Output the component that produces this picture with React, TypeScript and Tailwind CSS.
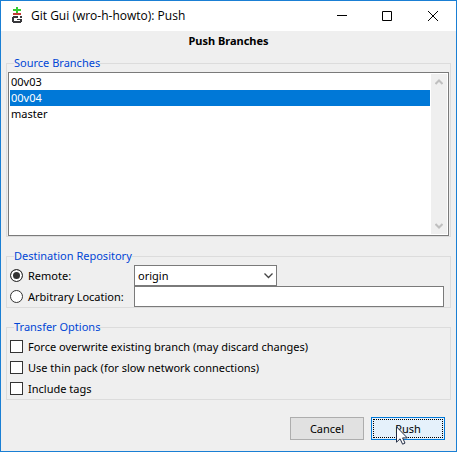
import { useState } from "react";
import type { ReactNode } from "react";

const branches = ["00v03", "00v04", "master"];

const transferOptions = [
  "Force overwrite existing branch (may discard changes)",
  "Use thin pack (for slow network connections)",
  "Include tags",
];

function Group({ title, children }: { title: string; children: ReactNode }) {
  return (
    <fieldset className="mx-[5px] min-w-0 border border-[#dcdcdc]">
      <legend className="ml-[7px] h-[17px] leading-4 text-[#0046d5]">{title}</legend>
      {children}
    </fieldset>
  );
}

function GitIcon() {
  return (
    <svg width="12" height="18" viewBox="0 0 12 18" shapeRendering="crispEdges" aria-hidden="true">
      <path d="M5 0h2v2h3v2H7v2H5V4H2V2h3z" fill="#31cb31" />
      <path d="M2 6h8v2H2z" fill="#c23a34" />
      <path d="M2 9h5v2H3v3h6v-1H6v-1h5v3h-1v1H2v-1H1v-5h1zM9 9h2v2H9z" fill="#38383c" />
    </svg>
  );
}

function ScrollArrow({ up = false }: { up?: boolean }) {
  return (
    <svg width="8" height="6" viewBox="0 0 8 6" fill="none" stroke="#bfbfbf" strokeWidth="2" aria-hidden="true">
      <path d={up ? "M.5 5 4 1.500 7.500 5" : "M.5 1 4 4.500 7.500 1"} />
    </svg>
  );
}

function TitleBar() {
  return (
    <header className="flex h-[30px] items-center bg-white pl-[10px]">
      <GitIcon />
      <h1 className="ml-2 grow font-['Open_Sans','Noto_Sans',sans-serif] text-xs">Git Gui (wro-h-howto): Push</h1>
      <button aria-label="Minimize" className="flex h-full w-[45px] items-center justify-center">
        <svg width="10" height="10" shapeRendering="crispEdges"><path d="M0 4h10v1H0z" /></svg>
      </button>
      <button aria-label="Maximize" className="flex h-full w-[45px] items-center justify-center">
        <svg width="10" height="10" fill="none" stroke="#000"><path d="M.5.5h9v9h-9z" /></svg>
      </button>
      <button aria-label="Close" className="flex h-full w-[47px] items-center justify-center">
        <svg width="10" height="10" stroke="#000"><path d="m0 0 10 10M10 0 0 10" /></svg>
      </button>
    </header>
  );
}

function Radio({ label, checked, onSelect }: { label: string; checked: boolean; onSelect: () => void }) {
  return (
    <label className="flex items-center gap-[5px]">
      <input
        type="radio"
        name="destination"
        checked={checked}
        onChange={onSelect}
        className="size-[13px] appearance-none rounded-full border border-[#333] bg-white shadow-[inset_0_0_0_2px_#fff] checked:bg-[#333]"
      />
      {label}
    </label>
  );
}

export default function App() {
  const [branch, setBranch] = useState("00v04");
  const [destination, setDestination] = useState("remote");

  return (
    <main className="relative border border-[#1a7fd4] bg-[#efefef] pb-[11px] font-['Noto_Sans','Open_Sans',sans-serif] text-[11px] leading-4 text-black">
      <TitleBar />
      <h2 className="mb-1 h-5 text-center leading-5 font-bold">Push Branches</h2>

      <div className="flex flex-col gap-[11px]">
        <Group title="Source Branches">
          <div className="mx-px flex h-[164px] border border-[#7a7a7a] bg-white p-px">
            <select
              size={10}
              aria-label="Source Branches"
              value={branch}
              onChange={(e) => setBranch(e.target.value)}
              className="min-w-0 grow appearance-none overflow-hidden outline-none"
            >
              {branches.map((name) => (
                <option
                  key={name}
                  className="h-4 px-px py-0 leading-4 checked:bg-[linear-gradient(#0078d7,#0078d7)] checked:[-webkit-text-fill-color:#fff]"
                >
                  {name}
                </option>
              ))}
            </select>
            <div className="ml-px flex w-4 flex-col items-center justify-between bg-[#efefef] py-[5px]">
              <ScrollArrow up />
              <ScrollArrow />
            </div>
          </div>
        </Group>

        <Group title="Destination Repository">
          <div className="grid grid-cols-[124px_1fr] grid-rows-[21px_21px] pr-[6px] pl-[3px]">
            <Radio label="Remote:" checked={destination === "remote"} onSelect={() => setDestination("remote")} />
            <div className="relative w-[143px]">
              <select aria-label="Remote" className="block h-[21px] w-full appearance-none border border-[#7a7a7a] bg-white pl-[3px]">
                <option>origin</option>
              </select>
              <svg width="9" height="6" viewBox="0 0 9 6" fill="none" stroke="#444" strokeWidth="1.3" className="pointer-events-none absolute top-2 right-1" aria-hidden="true">
                <path d="m.5.5 4 4 4-4" />
              </svg>
            </div>
            <Radio label="Arbitrary Location:" checked={destination === "url"} onSelect={() => setDestination("url")} />
            <input type="text" aria-label="Arbitrary Location" className="h-[21px] w-full min-w-0 border border-[#7a7a7a] bg-white px-[3px] outline-none" />
          </div>
        </Group>

        <Group title="Transfer Options">
          <div className="flex flex-col pl-[3px]">
            {transferOptions.map((option) => (
              <label key={option} className="flex h-[21px] items-center gap-[5px]">
                <input type="checkbox" className="size-[13px] appearance-none border border-[#333] bg-white checked:bg-[#333]" />
                {option}
              </label>
            ))}
          </div>
        </Group>
      </div>

      <footer className="mt-[17px] flex justify-end gap-[7px] pr-[11px]">
        <button className="h-[23px] w-[74px] border border-[#adadad] bg-[#e1e1e1]">Cancel</button>
        <button className="relative h-[23px] w-[74px] border border-[#0078d7] bg-[#e5f1fb] p-px">
          <span className="flex h-full items-center justify-center border border-dotted border-black">Push</span>
          <svg width="12" height="19" viewBox="0 0 12 19" className="pointer-events-none absolute top-2 left-6" aria-hidden="true">
            <path d="M.5.8v15.400l3.600-3.400 2.500 5.400 2.400-1.100-2.400-5.200h4.700z" fill="#fff" stroke="#222c44" />
          </svg>
        </button>
      </footer>
    </main>
  );
}
